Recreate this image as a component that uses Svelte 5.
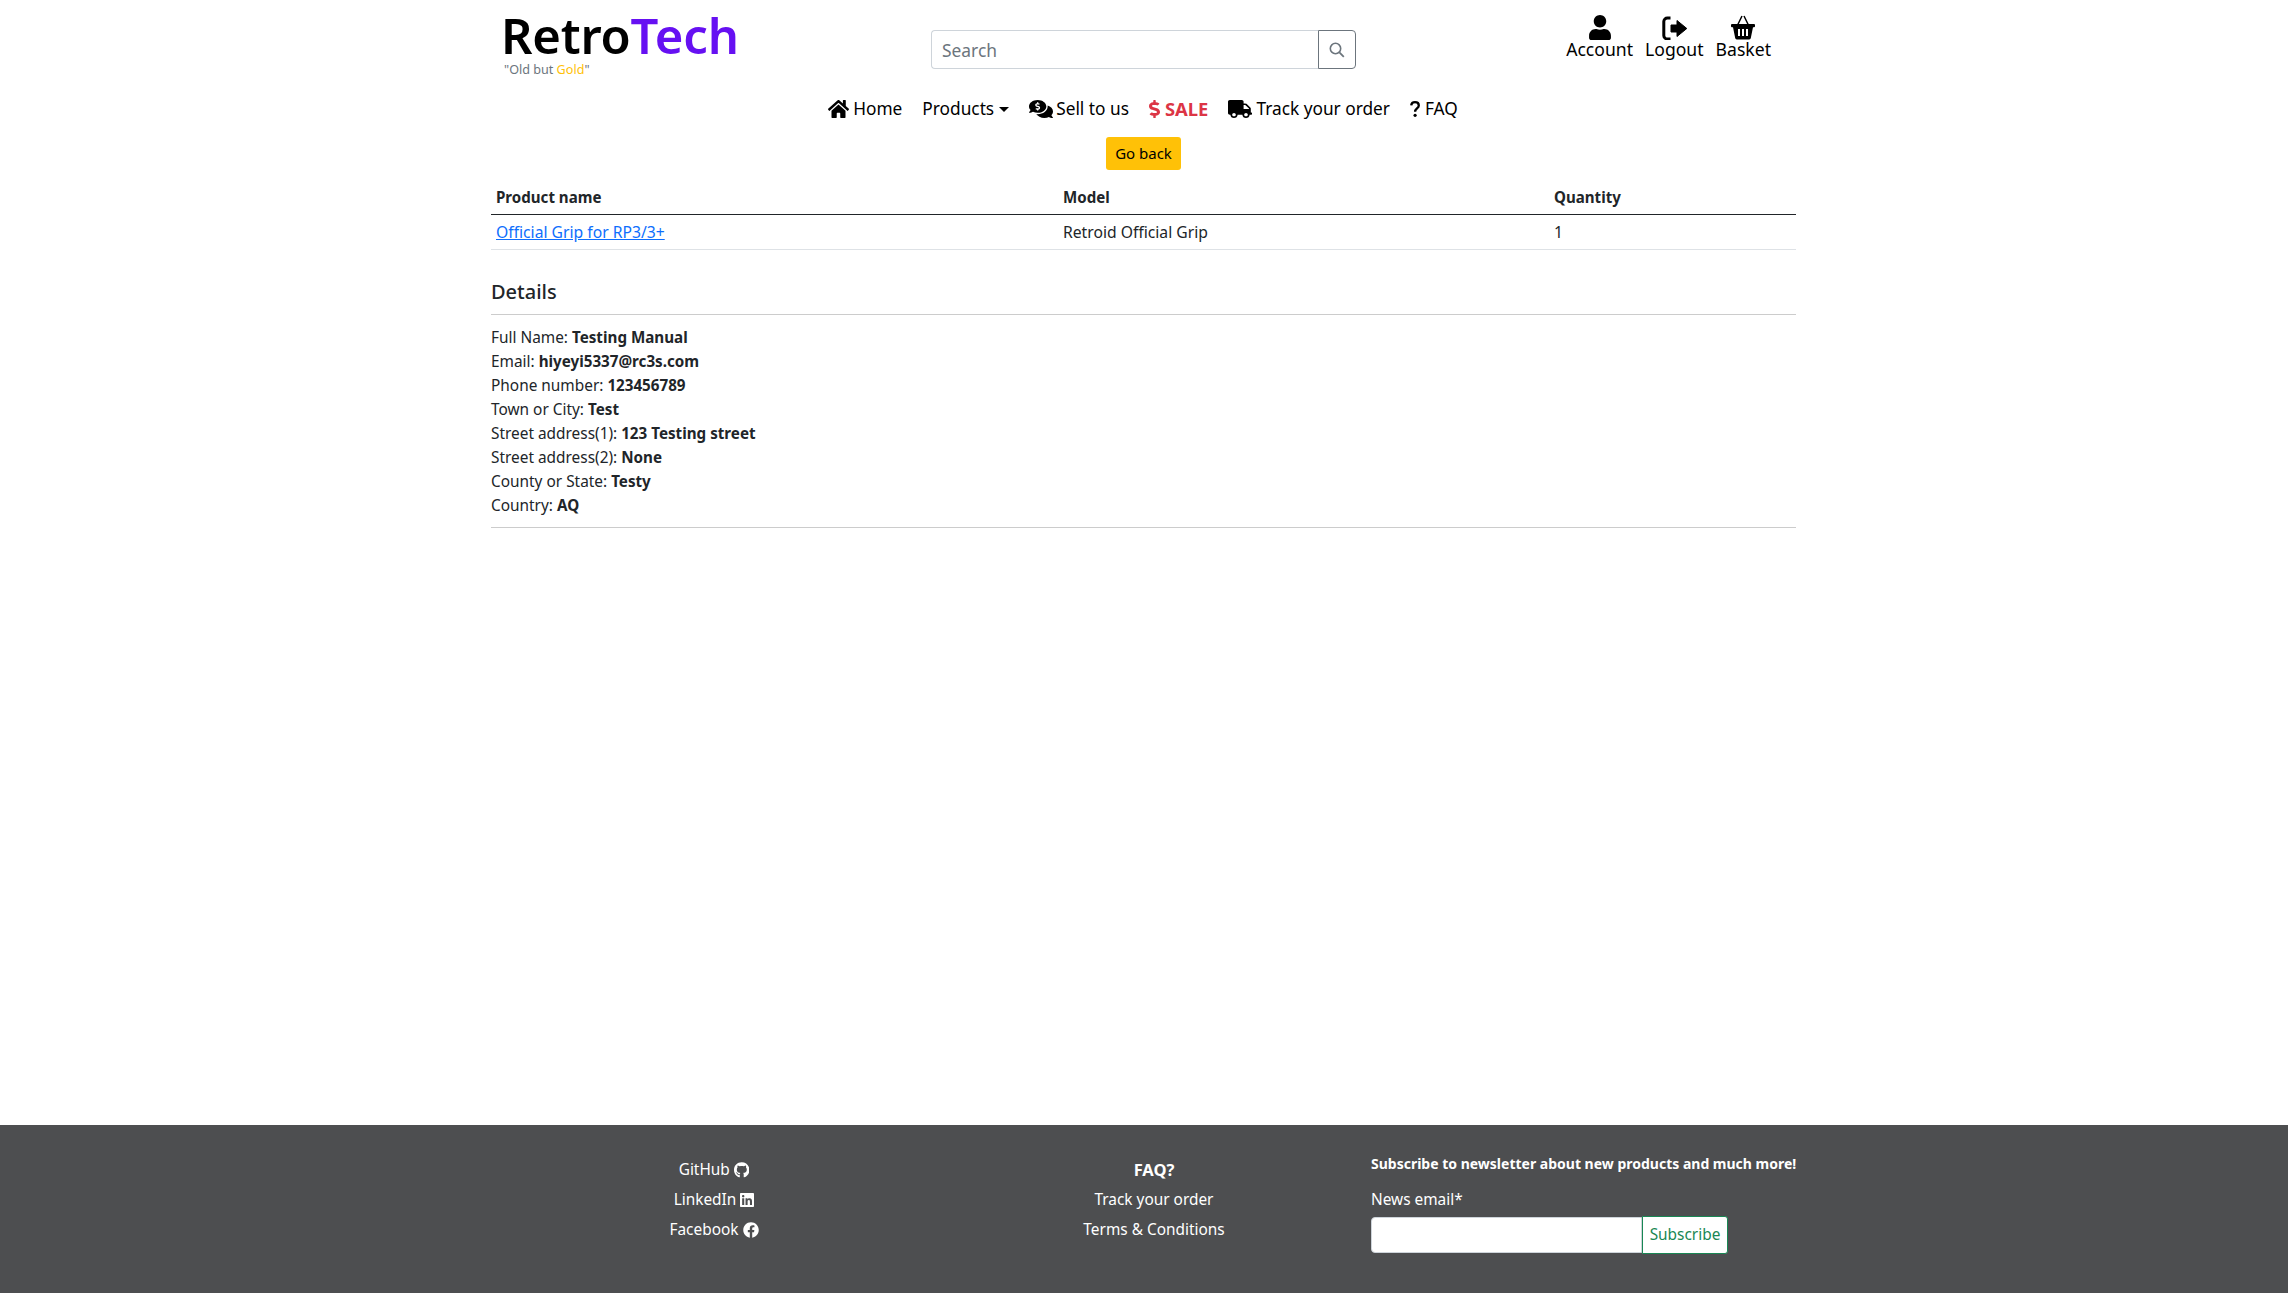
<script>
  const details = [
    ['Full Name:', 'Testing Manual'],
    ['Email:', 'hiyeyi5337@rc3s.com'],
    ['Phone number:', '123456789'],
    ['Town or City:', 'Test'],
    ['Street address(1):', '123 Testing street'],
    ['Street address(2):', 'None'],
    ['County or State:', 'Testy'],
    ['Country:', 'AQ']
  ];
</script>

<div class="page">
  <header class="top wrap">
    <div class="brand">
      <div class="logo">Retro<span class="violet">Tech</span></div>
      <div class="tag">"Old but <span class="gold">Gold</span>"</div>
    </div>
    <form class="search">
      <input class="search-input" placeholder="Search" />
      <button type="button" class="search-btn" aria-label="Search">
        <svg viewBox="0 0 16 16" width="16" height="16"><circle cx="6.5" cy="6.5" r="5.2" fill="none" stroke="currentColor" stroke-width="1.6"/><path d="M10.4 10.4 14.8 14.8" stroke="currentColor" stroke-width="1.8" fill="none"/></svg>
      </button>
    </form>
    <div class="actions">
      <a class="action" href="#a">
        <svg viewBox="0 0 448 512" width="22" height="25"><path d="M224 256c70.7 0 128-57.3 128-128S294.7 0 224 0 96 57.3 96 128s57.3 128 128 128zm89.6 32h-16.7c-22.2 10.2-46.9 16-72.9 16s-50.6-5.8-72.9-16h-16.7C60.2 288 0 348.2 0 422.4V464c0 26.5 21.5 48 48 48h352c26.5 0 48-21.5 48-48v-41.6c0-74.2-60.2-134.4-134.4-134.4z"/></svg>
        <span>Account</span>
      </a>
      <a class="action" href="#l">
        <svg viewBox="0 0 25 25" width="25" height="25"><path d="M8.5 3H5.5A3.6 3.6 0 0 0 1.8 6.6V20.4A3.6 3.6 0 0 0 5.5 24H8.5" fill="none" stroke="currentColor" stroke-width="3"/><path d="M9 10H15V5.5L24.8 13.5 15 21.5V17H9Z" stroke="currentColor" stroke-width="1" stroke-linejoin="round"/></svg>
        <span>Logout</span>
      </a>
      <a class="action" href="#b">
        <svg viewBox="0 0 24 25" width="24" height="25"><path d="M6.6 10 11 1M17.4 10 13 1" fill="none" stroke="currentColor" stroke-width="1.5"/><path fill-rule="evenodd" d="M1 9H23A1 1 0 0 1 24 10V11.2A1 1 0 0 1 23 12.2H22L19.8 23A1.6 1.6 0 0 1 18.2 24.4H5.8A1.6 1.6 0 0 1 4.2 23L2 12.2H1A1 1 0 0 1 0 11.2V10A1 1 0 0 1 1 9ZM7 14V21H9V14ZM11 14V21H13V14ZM15 14V21H17V14Z"/></svg>
        <span>Basket</span>
      </a>
    </div>
  </header>

  <nav class="nav">
    <a href="#h" class="g4"><svg viewBox="0 32 576 448" width="21" height="18" preserveAspectRatio="none"><path d="M280.37 148.26L96 300.11V464a16 16 0 0 0 16 16l112.06-.29a16 16 0 0 0 15.92-16V368a16 16 0 0 1 16-16h64a16 16 0 0 1 16 16v95.64a16 16 0 0 0 16 16.05L464 480a16 16 0 0 0 16-16V300L295.67 148.26a12.19 12.19 0 0 0-15.3 0zM571.6 251.47L488 182.56V44.05a12 12 0 0 0-12-12h-56a12 12 0 0 0-12 12v72.61L318.47 43a48 48 0 0 0-61 0L4.34 251.47a12 12 0 0 0-1.6 16.9l25.5 31A12 12 0 0 0 45.15 301l235.22-193.74a12.19 12.19 0 0 1 15.3 0L530.9 301a12 12 0 0 0 16.9-1.6l25.5-31a12 12 0 0 0-1.7-16.93z"/></svg>Home</a>
    <a href="#p" class="g5">Products<i class="caret"></i></a>
    <a href="#s" class="g3"><svg viewBox="0 32 576 448" width="24" height="18" preserveAspectRatio="none"><path d="M416 192c0-88.37-93.12-160-208-160S0 103.63 0 192c0 34.27 14.13 65.95 37.97 91.98C24.61 314.22 2.52 338.16 2.2 338.5A7.995 7.995 0 0 0 8 352c36.52 0 66.78-12.25 88.59-25.02C129.08 343.02 167.1 352 208 352c114.88 0 208-71.63 208-160zm-224 96v-16.29c-11.29-.58-22.27-4.52-31.37-11.35-3.9-2.93-4.1-8.77-.57-12.14l11.75-11.21c2.77-2.64 6.89-2.76 10.13-.73 3.87 2.42 8.26 3.72 12.82 3.72h28.11c6.5 0 11.8-5.92 11.8-13.19 0-5.95-3.61-11.19-8.77-12.73l-45-13.5c-18.59-5.58-31.58-23.42-31.58-43.39 0-24.52 19.05-44.44 42.67-45.07V96c0-4.42 3.58-8 8-8h16c4.42 0 8 3.58 8 8v16.29c11.29.58 22.27 4.51 31.37 11.35 3.9 2.93 4.1 8.77.57 12.14l-11.75 11.21c-2.77 2.64-6.89 2.76-10.13.73-3.87-2.43-8.26-3.72-12.82-3.72h-28.11c-6.5 0-11.8 5.92-11.8 13.19 0 5.95 3.61 11.19 8.77 12.73l45 13.5c18.59 5.58 31.58 23.42 31.58 43.39 0 24.53-19.05 44.44-42.67 45.07V288c0 4.42-3.58 8-8 8h-16c-4.42 0-8-3.58-8-8zm346.01 123.99C561.87 385.96 576 354.27 576 320c0-66.94-53.49-124.2-129.33-148.07.86 6.6 1.33 13.29 1.33 20.07 0 105.87-107.66 192-240 192-10.78 0-21.32-.77-31.73-1.88C207.8 439.63 281.77 480 368 480c40.9 0 78.92-8.98 111.41-25.02C501.22 467.75 531.48 480 568 480c3.2 0 6.09-1.91 7.34-4.84 1.27-2.94.67-6.35-1.54-8.67-.31-.33-22.4-24.28-35.79-54.5z"/></svg>Sell to us</a>
    <a href="#d" class="sale g5"><svg viewBox="0 0 288 512" width="11" height="18" preserveAspectRatio="none"><path d="M209.2 233.4l-108-31.6C88.7 198.2 80 186.5 80 173.5c0-16.3 13.2-29.5 29.5-29.5h66.3c12.2 0 24.2 3.7 34.2 10.5 6.1 4.1 14.3 3.1 19.5-2l34.8-34c7.1-6.9 6.1-18.4-1.8-24.5C238 74.8 207.4 64.1 176 64V16c0-8.8-7.2-16-16-16h-32c-8.8 0-16 7.2-16 16v48h-2.5C45.8 64-5.4 118.7.5 183.6c4.2 46.1 39.4 83.6 83.8 96.6l102.5 30c12.5 3.7 21.2 15.3 21.2 28.3 0 16.3-13.2 29.5-29.5 29.5h-66.3C100 368 88 364.3 78 357.5c-6.1-4.1-14.3-3.1-19.5 2l-34.8 34c-7.1 6.9-6.1 18.4 1.8 24.5 24.5 19.2 55.1 29.9 86.5 30v48c0 8.8 7.2 16 16 16h32c8.8 0 16-7.2 16-16v-48.2c46.6-.9 90.3-28.6 105.7-72.7 21.5-61.6-14.6-124.8-72.5-141.7z"/></svg>SALE</a>
    <a href="#t" class="g4"><svg viewBox="0 0 640 512" width="24" height="18" preserveAspectRatio="none"><path d="M624 352h-16V243.9c0-12.7-5.1-24.9-14.1-33.9L494 110.1c-9-9-21.2-14.1-33.9-14.1H416V48c0-26.5-21.5-48-48-48H48C21.5 0 0 21.5 0 48v320c0 26.5 21.5 48 48 48h16c0 53 43 96 96 96s96-43 96-96h128c0 53 43 96 96 96s96-43 96-96h48c8.8 0 16-7.2 16-16v-32c0-8.8-7.2-16-16-16zM160 464c-26.5 0-48-21.5-48-48s21.5-48 48-48 48 21.5 48 48-21.5 48-48 48zm320 0c-26.5 0-48-21.5-48-48s21.5-48 48-48 48 21.5 48 48-21.5 48-48 48zm80-208H416V144h44.1l99.9 99.9V256z"/></svg>Track your order</a>
    <a href="#f" class="g5"><svg viewBox="0 0 10 16" width="10" height="16"><path d="M1.2 4.4C1.4 2.2 3 1.2 5 1.2c2.2 0 3.8 1.2 3.8 3.2 0 3-3.7 3-3.7 6.3" fill="none" stroke="currentColor" stroke-width="2.3"/><circle cx="5.1" cy="14.3" r="1.6"/></svg>FAQ</a>
  </nav>

  <main class="wrap main">
    <div class="back-row"><a class="back" href="#back">Go back</a></div>
    <table>
      <colgroup><col class="c1" /><col class="c2" /><col /></colgroup>
      <thead><tr><th>Product name</th><th>Model</th><th>Quantity</th></tr></thead>
      <tbody><tr><td><a href="#g" class="link">Official Grip for RP3/3+</a></td><td>Retroid Official Grip</td><td>1</td></tr></tbody>
    </table>
    <h5 class="details-title">Details</h5>
    <div class="details">
      {#each details as [k, v]}
        <div class="row">{k} <b>{v}</b></div>
      {/each}
    </div>
  </main>

  <footer class="footer">
    <div class="f-col">
      <a href="#gh">GitHub <svg viewBox="0 0 496 512" height="16"><path d="M165.9 397.4c0 2-2.3 3.6-5.2 3.6-3.3 0-5.6-1.6-5.6-3.6 0-2 2.3-3.6 5.2-3.6 3-.3 5.6 1.3 5.6 3.6zm-31.1-4.5c-.7 2 1.3 4.3 4.3 4.9 2.6 1 5.6 0 6.2-2s-1.3-4.3-4.3-5.2c-2.6-.7-5.5.3-6.2 2.3zm44.2-1.7c-2.9.7-4.9 2.6-4.6 4.9.3 2 2.9 3.3 5.9 2.6 2.9-.7 4.9-2.6 4.6-4.6-.3-1.9-3-3.2-5.9-2.9zM244.8 8C106.1 8 0 113.3 0 252c0 110.9 69.8 205.8 169.5 239.2 12.8 2.3 17.3-5.6 17.3-12.1 0-6.2-.3-40.4-.3-61.4 0 0-70 15-84.7-29.8 0 0-11.4-29.1-27.8-36.6 0 0-22.9-15.7 1.6-15.4 0 0 24.9 2 38.6 25.8 21.9 38.6 58.6 27.5 72.9 20.9 2.3-16 8.8-27.1 16-33.7-55.9-6.2-112.3-14.3-112.3-110.5 0-27.5 7.6-41.3 23.6-58.9-2.6-6.5-11.1-33.3 2.6-67.9 20.9-6.5 69 27 69 27 20-5.6 41.5-8.5 62.8-8.5s42.8 2.9 62.8 8.5c0 0 48.1-33.6 69-27 13.7 34.7 5.2 61.4 2.6 67.9 16 17.7 25.8 31.5 25.8 58.9 0 96.5-58.9 104.2-114.8 110.5 9.2 7.9 17 22.9 17 46.4 0 33.7-.3 75.4-.3 83.6 0 6.5 4.6 14.4 17.3 12.1C428.2 457.8 496 362.9 496 252 496 113.3 383.5 8 244.8 8z"/></svg></a>
      <a href="#li">LinkedIn <svg viewBox="0 0 448 512" height="16"><path d="M416 32H31.9C14.3 32 0 46.5 0 64.3v383.4C0 465.5 14.3 480 31.9 480H416c17.6 0 32-14.5 32-32.3V64.3c0-17.8-14.4-32.3-32-32.3zM135.4 416H69V202.2h66.5V416zm-33.2-243c-21.3 0-38.5-17.3-38.5-38.5S80.9 96 102.2 96c21.2 0 38.5 17.3 38.5 38.5 0 21.3-17.2 38.5-38.5 38.5zm282.1 243h-66.4V312c0-24.8-.5-56.7-34.5-56.7-34.6 0-39.9 27-39.9 54.9V416h-66.4V202.2h63.7v29.2h.9c8.9-16.8 30.6-34.5 62.9-34.5 67.2 0 79.7 44.3 79.7 101.9V416z"/></svg></a>
      <a href="#fb">Facebook <svg viewBox="0 0 512 512" height="16"><path d="M504 256C504 119 393 8 256 8S8 119 8 256c0 123.78 90.69 226.38 209.25 245V327.69h-63V256h63v-54.64c0-62.15 37-96.48 93.67-96.48 27.14 0 55.52 4.84 55.52 4.84v61h-31.28c-30.8 0-40.41 19.12-40.41 38.73V256h68.75l-11 71.69h-57.75V501C413.31 482.38 504 379.78 504 256z"/></svg></a>
    </div>
    <div class="f-col">
      <a href="#faq"><b class="faq">FAQ?</b></a>
      <a href="#tr">Track your order</a>
      <a href="#tc">Terms &amp; Conditions</a>
    </div>
    <div class="f-sub">
      <div class="f-title">Subscribe to newsletter about new products and much more!</div>
      <label class="f-label" for="news">News email*</label>
      <div class="f-form">
        <input id="news" class="f-input" />
        <button type="button" class="f-btn">Subscribe</button>
      </div>
    </div>
  </footer>
</div>

<style>
  :global(body) { margin: 0; background: #fff; }
  .page {
    font-family: "Noto Sans", "Open Sans", sans-serif;
    font-size: 15.4px;
    line-height: 24px;
    color: #212529;
    height: 1293px;
    display: flex;
    flex-direction: column;
  }
  a { color: inherit; text-decoration: none; }
  svg { fill: currentColor; flex: none; }
  .wrap { width: 1305px; margin: 0 0 0 491px; }

  .top { display: flex; height: 88px; box-sizing: border-box; }
  .brand { width: 440px; padding: 7px 0 0 10px; box-sizing: border-box; color: #000; }
  .logo { font-size: 49px; line-height: 56px; font-weight: 600; letter-spacing: -0.2px; }
  .violet { color: #6610f2; }
  .tag { font-size: 12.6px; line-height: 16px; margin: -1px 0 0 3px; color: #6c757d; }
  .gold { color: #ffc107; }

  .search { display: flex; width: 425px; height: 39px; margin-top: 30px; }
  .search-input {
    flex: 1; min-width: 0; box-sizing: border-box; border: 1px solid #ced4da; border-right: 0;
    border-radius: 4px 0 0 4px; padding: 6px 10px; font: inherit; font-size: 17.4px; color: #212529; outline: 0;
  }
  .search-input::placeholder { color: #6c757d; opacity: 1; }
  .search-btn {
    width: 38px; padding: 0; background: #fff; color: #6c757d; border: 1px solid #6c757d;
    border-radius: 0 4px 4px 0; display: flex; align-items: center; justify-content: center;
  }

  .actions { display: flex; margin-left: auto; padding: 15px 25px 0 0; gap: 12px; color: #000; }
  .action { display: flex; flex-direction: column; align-items: center; line-height: 18px; font-size: 17.6px; }
  .action svg { display: block; }

  .nav { display: flex; justify-content: center; gap: 20px; height: 40px; padding: 1px 2px 0 0; align-items: center; color: #000; font-size: 17.3px; }
  .nav a { display: flex; align-items: center; white-space: nowrap; }
  .g3 { gap: 3px; }
  .g4 { gap: 4px; }
  .g5 { gap: 5px; }
  .sale { color: #dc3545; font-weight: 700; font-size: 18.4px; }
  .caret { width: 0; height: 0; border-top: 5px solid currentColor; border-left: 5px solid transparent; border-right: 5px solid transparent; }

  .main { flex: 1; padding-top: 8px; }
  .back-row { display: flex; justify-content: center; }
  .back { height: 33px; line-height: 33px; width: 75px; text-align: center; background: #ffc107; color: #000; border-radius: 3px; font-size: 15px; }

  table { width: 100%; border-collapse: collapse; table-layout: fixed; margin-top: 11px; }
  .c1 { width: 567px; }
  .c2 { width: 491px; }
  th { text-align: left; padding: 3px 5px 5px; height: 25px; border-bottom: 1px solid #212529; font-weight: 700; font-size: 15.1px; }
  td { padding: 4px 5px; height: 26px; border-bottom: 1px solid #dee2e6; font-size: 15.7px; }
  .link { color: #0d6efd; text-decoration: underline; }

  .details-title { margin: 30px 0 0; font-size: 20px; line-height: 24px; font-weight: 500; padding-bottom: 10px; border-bottom: 1px solid #ccc; }
  .details { padding: 10px 0 10px; border-bottom: 1px solid #ccc; }
  .row { height: 24px; }
  b { font-weight: 700; font-size: 15.2px; }

  .footer {
    height: 168px; box-sizing: border-box; background: #4d4e50; color: #fff;
    padding: 30px 0 0 494px; display: grid; grid-template-columns: 440px 440px 1fr;
  }
  .f-col { display: flex; flex-direction: column; align-items: center; line-height: 30px; }
  .f-col a { display: flex; align-items: center; gap: 4px; height: 30px; }
  .faq { font-size: 16.5px; }
  .f-sub { margin-left: -3px; }
  .f-title { font-size: 14px; font-weight: 700; line-height: 18px; }
  .f-label { display: block; margin-top: 17px; line-height: 20px; }
  .f-form { display: flex; align-items: center; margin-top: 6px; }
  .f-input { width: 271px; height: 36px; box-sizing: border-box; border: 1px solid #ced4da; border-radius: 4px 0 0 4px; background: #fff; }
  .f-btn { width: 86px; height: 38px; padding: 0; background: #fff; color: #198754; border: 1px solid #198754; border-radius: 0 3px 3px 0; font: inherit; }
</style>
